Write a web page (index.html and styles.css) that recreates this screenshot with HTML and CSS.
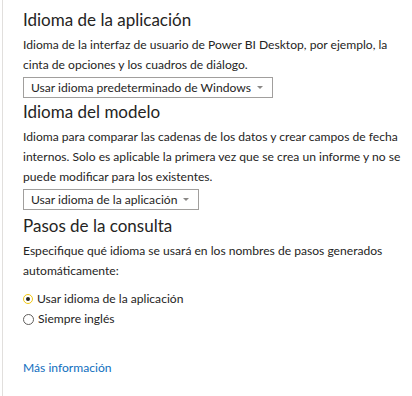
FILE: index.html
```html
<!DOCTYPE html>
<html lang="es">
<head>
<meta charset="utf-8">
<title>Idioma</title>
<link rel="stylesheet" href="styles.css">
</head>
<body>
<div class="panel">
  <section class="group">
    <h2 class="title">Idioma de la aplicación</h2>
    <p class="desc">Idioma de la interfaz de usuario de Power BI Desktop, por ejemplo, la cinta de opciones y los cuadros de diálogo.</p>
    <div class="select"><span>Usar idioma predeterminado de Windows</span><svg class="caret" width="6" height="3" viewBox="0 0 6 3"><path d="M0 0H6L3 3Z" fill="#8a8886"/></svg></div>
  </section>
  <section class="group">
    <h2 class="title">Idioma del modelo</h2>
    <p class="desc">Idioma para comparar las cadenas de los datos y crear campos de fecha internos. Solo es aplicable la primera vez que se crea un informe y no se puede modificar para los existentes.</p>
    <div class="select"><span>Usar idioma de la aplicación</span><svg class="caret" width="6" height="3" viewBox="0 0 6 3"><path d="M0 0H6L3 3Z" fill="#8a8886"/></svg></div>
  </section>
  <section class="group steps">
    <h2 class="title">Pasos de la consulta</h2>
    <p class="desc">Especifique qué idioma se usará en los nombres de pasos generados automáticamente:</p>
    <div class="radios">
      <label class="radio"><span class="dot on"></span>Usar idioma de la aplicación</label>
      <label class="radio"><span class="dot"></span>Siempre inglés</label>
    </div>
  </section>
  <a class="more" href="#">Más información</a>
</div>
</body>
</html>
```

FILE: styles.css
```css
html, body {
  margin: 0;
  padding: 0;
  background: #ffffff;
}
body {
  font-family: Lato, "Noto Sans", sans-serif;
  color: #252423;
  width: 412px;
  height: 396px;
  overflow: hidden;
}
.panel {
  margin-left: 2px;
  border-left: 1px solid #e1dfdd;
  padding: 6px 6px 0 20px;
  height: 396px;
  box-sizing: border-box;
  width: 410px;
}
.group {
  display: flex;
  flex-direction: column;
  align-items: flex-start;
}
.steps {
  margin-top: 2px;
}
.title {
  font-size: 17px;
  font-weight: 400;
  line-height: 28px;
  margin: 0;
  color: #252423;
}
.desc {
  font-size: 12.1px;
  line-height: 20px;
  margin: 1px 0 0 0;
}
.select {
  display: flex;
  align-items: center;
  height: 21px;
  box-sizing: border-box;
  border: 1px solid #a19f9d;
  padding: 0 9px 0 7px;
  font-size: 12.1px;
  gap: 6px;
  margin-top: 2px;
}
.caret {
  display: block;
}
.radios {
  display: flex;
  flex-direction: column;
  margin-top: 8px;
}
.radio {
  display: flex;
  align-items: center;
  font-size: 12.1px;
  line-height: 20px;
  gap: 4px;
}
.dot {
  width: 9px;
  height: 9px;
  border: 1px solid #605e5c;
  border-radius: 50%;
  box-sizing: content-box;
  display: flex;
  align-items: center;
  justify-content: center;
}
.dot.on {
  border-color: #f2c811;
  border-width: 1.5px;
  width: 8px;
  height: 8px;
}
.dot.on::after {
  content: "";
  width: 4px;
  height: 4px;
  border-radius: 50%;
  background: #252423;
}
.more {
  display: inline-block;
  margin-top: 31px;
  font-size: 12.1px;
  color: #106ebe;
  text-decoration: none;
}
```
